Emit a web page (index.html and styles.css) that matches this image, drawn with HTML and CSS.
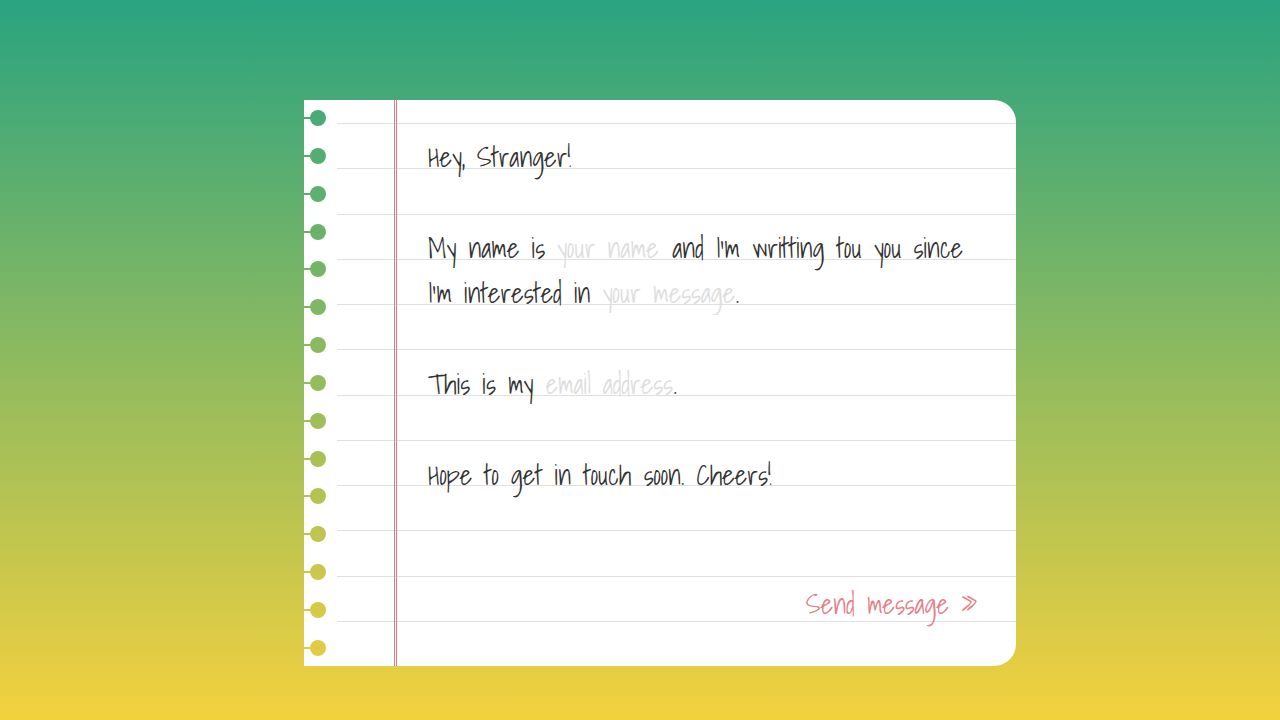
FILE: index.html
```html
<!DOCTYPE html>
<html lang="en">
  <head>
    <meta charset="UTF-8" />
    <meta name="viewport" content="width=device-width, initial-scale=1" />
    <title>Contact</title>
    <link rel="stylesheet" href="styles.css" />
  </head>
  <body>
    <form class="note">
      <!-- ruled lines -->
      <div class="rules" aria-hidden="true">
        <i></i><i></i><i></i><i></i><i></i><i></i>
        <i></i><i></i><i></i><i></i><i></i><i></i>
      </div>

      <!-- punched holes -->
      <div class="holes" aria-hidden="true">
        <i></i><i></i><i></i><i></i><i></i>
        <i></i><i></i><i></i><i></i><i></i>
        <i></i><i></i><i></i><i></i><i></i>
      </div>

      <div class="letter">
        <p>Hey, Stranger!</p>
        <p>
          <label for="name">My name is</label>
          <input class="name" type="text" id="name" placeholder="your name" />
          and I'm writting tou you since
          <br />
          <label for="message">I'm interested in</label>
          <input class="message" type="text" id="message" placeholder="your message" />.
        </p>
        <p>
          <label for="email">This is my</label>
          <input class="email" type="email" id="email" placeholder="email address" />.
        </p>
        <p>Hope to get in touch soon. Cheers!</p>
        <button type="submit">Send message &raquo;</button>
      </div>
    </form>
  </body>
</html>
```

FILE: styles.css
```css
* {
  box-sizing: border-box;
}

body {
  min-height: 100vh;
  margin: 0;
  padding: 100px 20px 54px 60px;
  background: linear-gradient(#29a380, #f4d13e) fixed;
  color: #333;
  font-family: "Shadows Into Light", "Liberation Sans Narrow", "Liberation Sans", sans-serif;
  font-size: 27px;
  line-height: 45px;
}

.note {
  position: relative;
  max-width: 712px;
  margin: 0 auto;
  padding-left: 90px;
  background: #fff;
  border-radius: 0 22px 22px 0;
}

.rules {
  position: absolute;
  inset: 23px 0 44px 33px;
  display: flex;
  flex-direction: column;
  justify-content: space-between;
}

.rules i {
  height: 1px;
  background: #e0e0e0;
}

.holes {
  position: absolute;
  inset: 10px auto 10px 0;
  display: flex;
  flex-direction: column;
  justify-content: space-between;
}

/* the page gradient shows through each hole */
.holes i {
  position: relative;
  width: 16px;
  height: 16px;
  margin-left: 6px;
  border-radius: 50%;
  background: linear-gradient(#29a380, #f4d13e) fixed;
}

.holes i::before {
  content: "";
  position: absolute;
  top: 7px;
  left: -6px;
  width: 8px;
  height: 2px;
  background: inherit;
}

.letter {
  position: relative;
  display: flex;
  flex-direction: column;
  padding: 35px 38px 39px 31px;
  border-left: 3px double #e07c80;
}

p {
  margin: 0 0 46px;
}

input,
button {
  padding: 0;
  border: 0;
  background: none;
  color: inherit;
  font: inherit;
}

input {
  height: 45px;
  outline: none;
  vertical-align: top;
}

input::placeholder {
  color: #ddd;
  opacity: 1;
}

.name {
  width: 103px;
}

.message {
  width: 133px;
}

.email {
  width: 128px;
}

button {
  align-self: flex-end;
  margin-top: 38px;
  color: #e58084;
  cursor: pointer;
}
```
